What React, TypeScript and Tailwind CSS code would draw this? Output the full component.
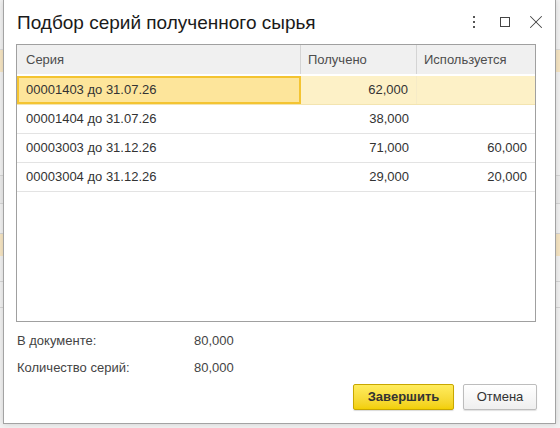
import { X } from "lucide-react"

type Row = {
  series: string
  received: string
  used: string
}

const rows: Row[] = [
  { series: "00001403 до 31.07.26", received: "62,000", used: "" },
  { series: "00001404 до 31.07.26", received: "38,000", used: "" },
  { series: "00003003 до 31.12.26", received: "71,000", used: "60,000" },
  { series: "00003004 до 31.12.26", received: "29,000", used: "20,000" },
]

// Form behind the modal window, mostly hidden
function BackdropForm() {
  return (
    <div className="flex h-full flex-col bg-[#f2f2f2]">
      <div className="h-[50px] border-b border-[#dcdcdc]" />
      <div className="h-[22px] bg-[#f7e6c4]" />
      <div className="h-[104px] border-b border-[#d6d6d6]" />
      <div className="h-[28px] border-b border-[#d6d6d6] bg-[#ececec]" />
      <div className="h-[30px] border-b border-[#d6d6d6]" />
      <div className="h-[22px] bg-[#f7e6c4]" />
      <div className="h-[26px] border-b border-[#d6d6d6]" />
      <div className="h-[26px] border-b border-[#d6d6d6]" />
      <div className="flex-1" />
    </div>
  )
}

function KebabIcon() {
  return (
    <svg width="4" height="12" viewBox="0 0 4 12" className="text-[#555]">
      <rect x="1" y="0" width="2" height="2" fill="currentColor" />
      <rect x="1" y="5" width="2" height="2" fill="currentColor" />
      <rect x="1" y="10" width="2" height="2" fill="currentColor" />
    </svg>
  )
}

export default function App() {
  return (
    <div
      className="relative h-[428px] w-[560px] overflow-hidden text-[13px] text-[#333]"
      style={{ fontFamily: "'Liberation Sans', Arial, sans-serif" }}
    >
      <BackdropForm />

      {/* Modal window */}
      <div className="absolute left-[3px] top-0 flex h-[424px] w-[553px] flex-col border border-t-0 border-[#a3a3a3] bg-white shadow-[0_0_6px_rgba(0,0,0,0.15)]">
        {/* Title bar */}
        <div className="flex h-[44px] items-center pl-[13px] pr-[4px]">
          <h1 className="flex-1 pt-[1px] text-[19px] leading-none text-[#1a1a1a]">
            Подбор серий полученного сырья
          </h1>
          <div className="flex items-center">
            <div className="flex w-[31px] justify-center">
              <KebabIcon />
            </div>
            <div className="flex w-[31px] justify-center">
              <div className="h-[10px] w-[10px] border border-[#444]" />
            </div>
            <div className="flex w-[31px] justify-center">
              <X className="h-[22px] w-[22px] text-[#444]" strokeWidth={1.1} />
            </div>
          </div>
        </div>

        {/* Series table */}
        <div className="ml-[12px] mr-[19px] flex h-[278px] flex-col border border-[#a0a0a0]">
          <div className="flex h-[31px] border-b-2 border-white bg-[#f0f0f0] text-[#4d4d4d]">
            <div className="flex w-[284px] items-center border-r border-[#d4d4d4] pl-[9px]">Серия</div>
            <div className="flex w-[116px] items-center border-r border-[#d4d4d4] pl-[7px]">Получено</div>
            <div className="flex flex-1 items-center pl-[7px]">Используется</div>
          </div>
          {rows.map((row, i) => {
            const selected = i === 0
            return (
              <div
                key={row.series}
                className={`flex h-[29px] border-b ${selected ? "border-[#f3e4b0] bg-[#fdf1c7]" : "border-[#e3e3e3]"}`}
              >
                <div
                  className={
                    selected
                      ? "flex w-[284px] items-center border-2 border-[#f4c431] bg-[#fde59b] pl-[7px]"
                      : "flex w-[284px] items-center pl-[9px]"
                  }
                >
                  {row.series}
                </div>
                <div
                  className={`flex w-[116px] items-center justify-end pr-[8px] ${selected ? "border-r border-[#f6ebc7]" : ""}`}
                >
                  {row.received}
                </div>
                <div className="flex flex-1 items-center justify-end pr-[8px]">{row.used}</div>
              </div>
            )
          })}
        </div>

        {/* Totals */}
        <div className="mt-[9px] flex flex-col gap-[8px] pl-[13px] text-[#444]">
          <div className="flex h-[19px] items-center">
            <span className="w-[177px]">В документе:</span>
            <span>80,000</span>
          </div>
          <div className="flex h-[19px] items-center">
            <span className="w-[177px]">Количество серий:</span>
            <span>80,000</span>
          </div>
        </div>

        {/* Actions */}
        <div className="mt-[7px] flex justify-end gap-[9px] pr-[18px]">
          <button className="h-[26px] w-[101px] rounded-[2px] border border-[#c8a700] bg-gradient-to-b from-[#ffec5c] to-[#f2cf00] text-[13px] font-bold text-[#333] shadow-[0_1px_1px_rgba(0,0,0,0.15)]">
            Завершить
          </button>
          <button className="h-[26px] w-[74px] rounded-[2px] border border-[#bdbdbd] bg-gradient-to-b from-white to-[#efefef] text-[13px] text-[#333] shadow-[0_1px_1px_rgba(0,0,0,0.12)]">
            Отмена
          </button>
        </div>
      </div>
    </div>
  )
}
